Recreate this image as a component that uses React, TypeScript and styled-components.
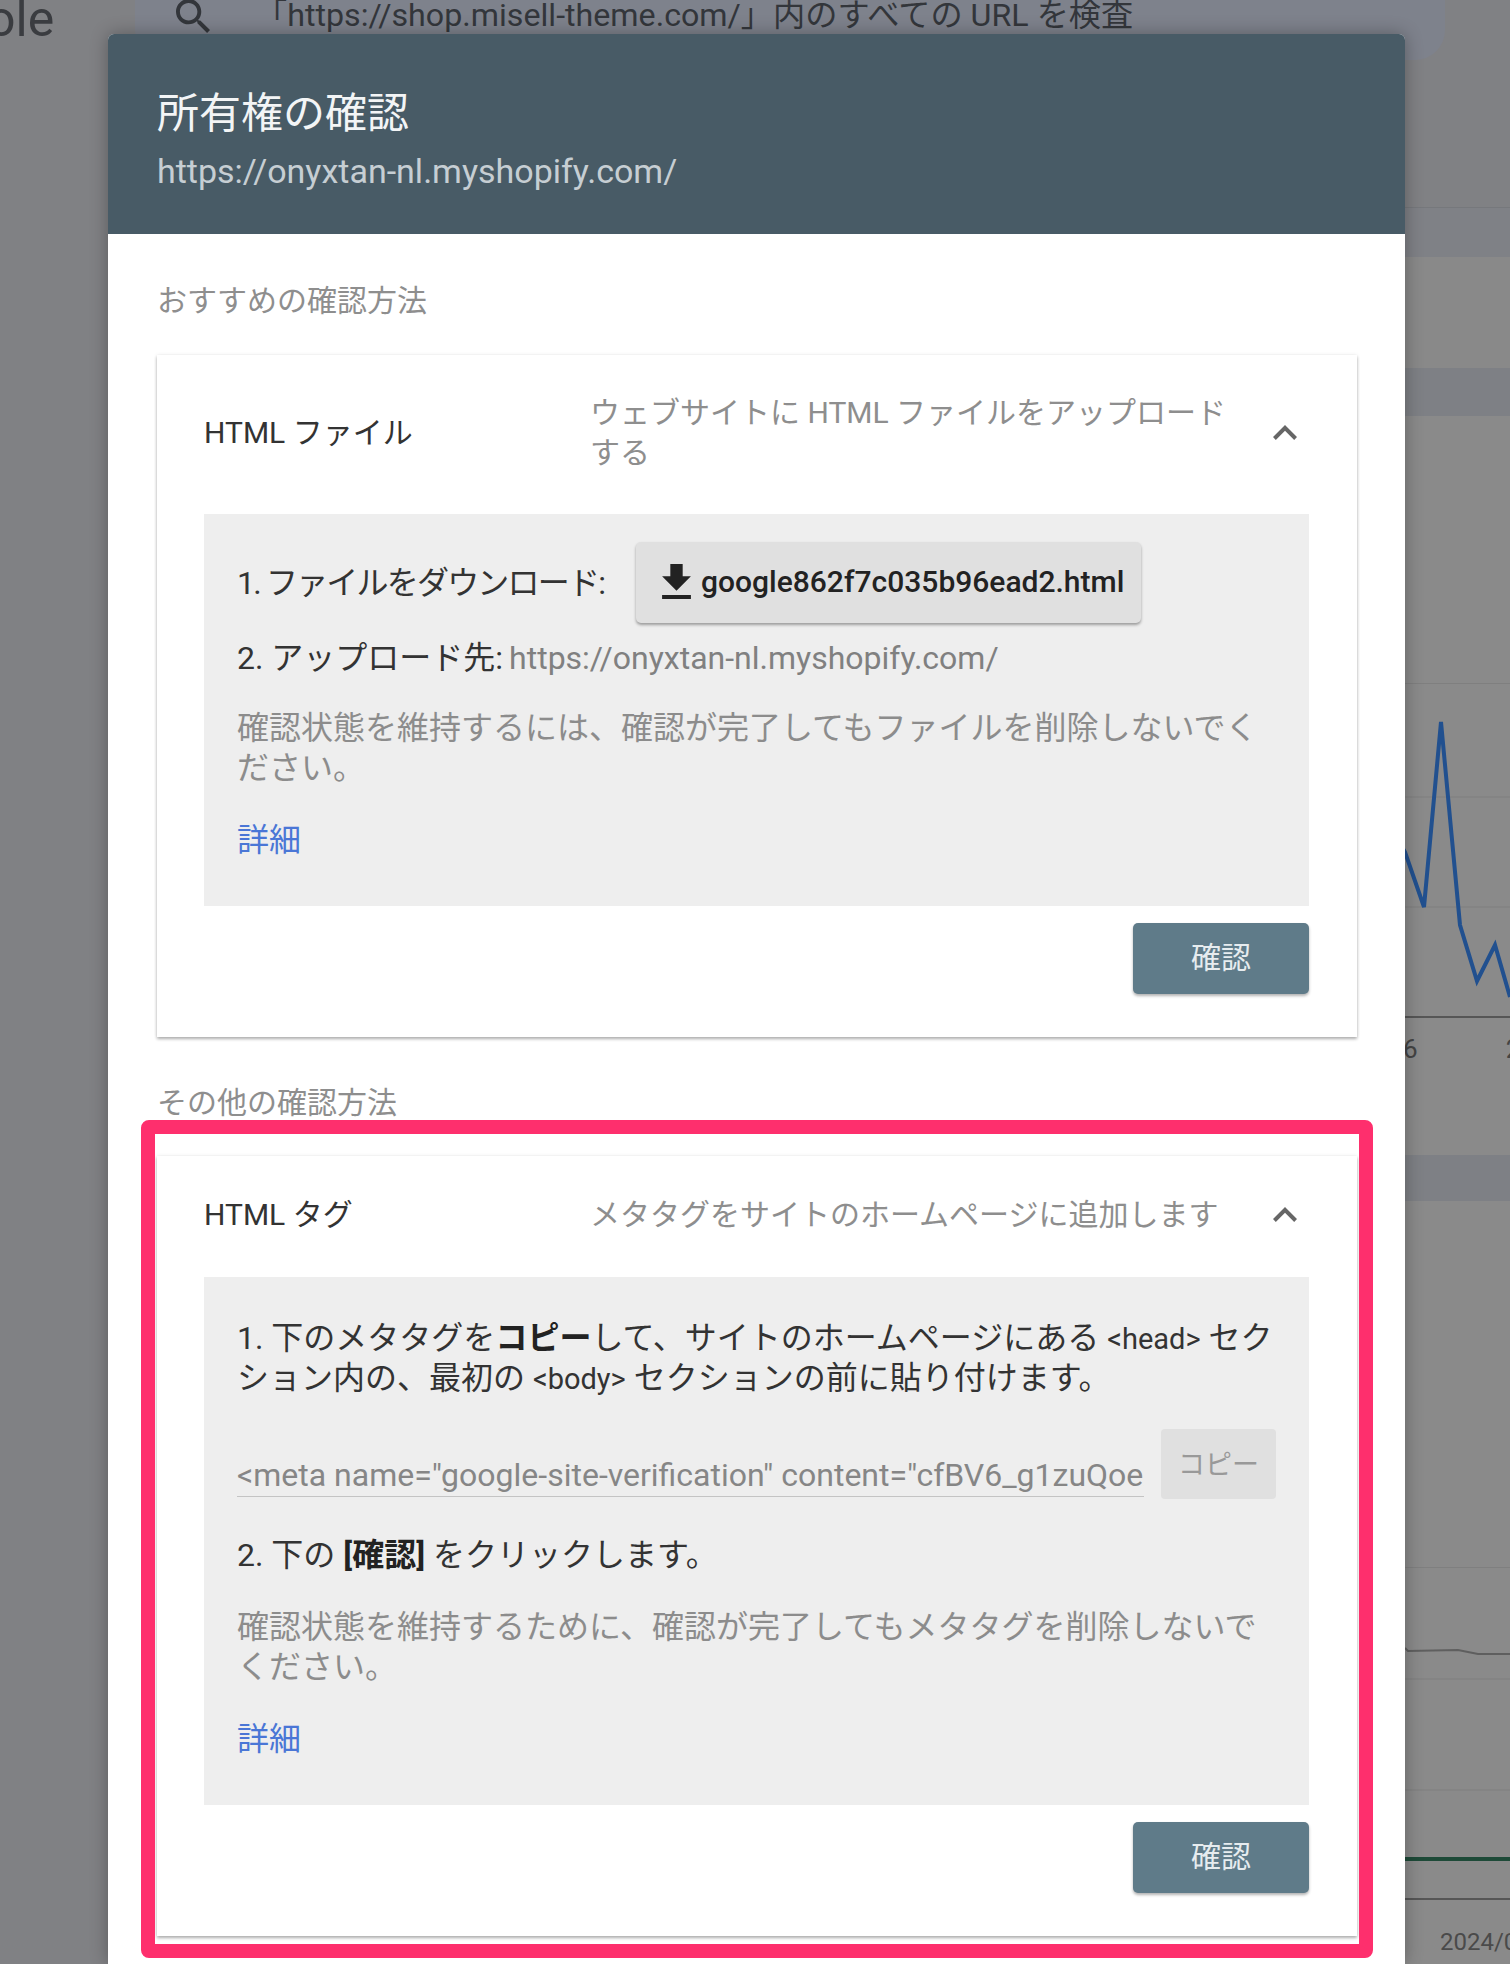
import styled, { createGlobalStyle } from 'styled-components';

const GlobalStyle = createGlobalStyle`
  html, body {
    margin: 0;
    padding: 0;
    background: #808184;
  }
  body {
    font-family: Roboto, "Noto Sans CJK JP", sans-serif;
  }
`;

const ChevronUp = () => (
  <Chevron viewBox="6 8 12 7.41" width="24" height="15">
    <path d="M12 8l-6 6 1.41 1.41L12 10.83l4.59 4.58L18 14z" />
  </Chevron>
);

const App = () => {
  return (
    <Page>
      <GlobalStyle />
      <Backdrop>
        <TopBar>
          <Logo>ole</Logo>
          <SearchBar>
            <SearchIcon viewBox="3 3 17.49 17.49" width="34" height="34">
              <path d="M15.5 14h-.79l-.28-.27C15.41 12.59 16 11.11 16 9.5 16 5.91 13.09 3 9.5 3S3 5.91 3 9.5 5.91 16 9.5 16c1.61 0 3.09-.59 4.23-1.57l.27.28v.79l5 4.99L20.49 19l-4.99-5zm-6 0C7.01 14 5 11.99 5 9.5S7.01 5 9.5 5 14 7.01 14 9.5 11.99 14 9.5 14z" />
            </SearchIcon>
            <SearchText>「https://shop.misell-theme.com/」内のすべての URL を検査</SearchText>
          </SearchBar>
        </TopBar>
        <Columns>
          <Sidebar />
          <Main>
            <Stripe $height={50} $ruled />
            <Stripe $height={111} $tone="plain" />
            <Stripe $height={48} $tone="band" />
            <ChartPanel $top={267} $height={739}>
              <svg width="1402" height="335" viewBox="0 0 1402 335">
                <GridLine x2="1402" y1="0.5" y2="0.5" />
                <GridLine x2="1402" y1="114" y2="114" />
                <GridLine x2="1402" y1="224" y2="224" />
                <AxisLine x2="1402" y1="334" y2="334" />
                <polyline
                  points="1280,140 1297,169 1316,224 1333,39 1352,242 1369,298 1387,262 1402,314"
                  fill="none"
                  stroke="#21508f"
                  strokeWidth="4"
                />
              </svg>
              <AxisLabels>
                <span>6</span>
                <span>2</span>
              </AxisLabels>
            </ChartPanel>
            <Stripe $height={46} $tone="band" />
            <ChartPanel $top={366} $height={763}>
              <svg width="1402" height="335" viewBox="0 0 1402 335">
                <GridLine x2="1402" y1="0.5" y2="0.5" />
                <GridLine x2="1402" y1="112" y2="112" />
                <GridLine x2="1402" y1="223" y2="223" />
                <AxisLine x2="1402" y1="332" y2="332" />
                <polyline
                  points="1297,81 1300,84 1350,83 1370,87 1402,87"
                  fill="none"
                  stroke="#5f5f5f"
                  strokeWidth="2"
                />
                <line x1="1280" x2="1402" y1="292" y2="292" stroke="#1e4a38" strokeWidth="4" />
              </svg>
              <DateLabel>2024/0</DateLabel>
            </ChartPanel>
          </Main>
        </Columns>
      </Backdrop>

      <Modal>
        <ModalHeader>
          <ModalTitle>所有権の確認</ModalTitle>
          <ModalSubtitle>https://onyxtan-nl.myshopify.com/</ModalSubtitle>
        </ModalHeader>
        <ModalBody>
          <SectionLabel $top={47} $bottom={34}>おすすめの確認方法</SectionLabel>
          <Card>
            <CardHead>
              <CardTitle>HTML ファイル</CardTitle>
              <CardDesc>ウェブサイトに HTML ファイルをアップロードする</CardDesc>
              <ChevronUp />
            </CardHead>
            <Panel $top={28}>
              <DownloadRow>
                <DownloadLabel>1. ファイルをダウンロード:</DownloadLabel>
                <DownloadButton>
                  <svg viewBox="5 3 14 17" width="29" height="35" fill="#222">
                    <path d="M19 9h-4V3H9v6H5l7 7 7-7zM5 18v2h14v-2H5z" />
                  </svg>
                  google862f7c035b96ead2.html
                </DownloadButton>
              </DownloadRow>
              <StepText $top={15}>
                2. アップロード先: <Url>https://onyxtan-nl.myshopify.com/</Url>
              </StepText>
              <Hint>確認状態を維持するには、確認が完了してもファイルを削除しないでください。</Hint>
              <MoreLink href="#">詳細</MoreLink>
            </Panel>
            <CardFoot>
              <ConfirmButton>確認</ConfirmButton>
            </CardFoot>
          </Card>

          <SectionLabel $top={46} $bottom={33}>その他の確認方法</SectionLabel>
          <Card>
            <CardHead>
              <CardTitle>HTML タグ</CardTitle>
              <CardDesc>メタタグをサイトのホームページに追加します</CardDesc>
              <ChevronUp />
            </CardHead>
            <Panel $top={41}>
              <StepText>
                1. 下のメタタグを<b>コピー</b>して、サイトのホームページにある <Code>&lt;head&gt;</Code> セクション内の、最初の <Code>&lt;body&gt;</Code> セクションの前に貼り付けます。
              </StepText>
              <MetaRow>
                <MetaField>
                  &lt;meta name="google-site-verification" content="cfBV6_g1zuQoeXk2mT8vYpLr" /&gt;
                </MetaField>
                <CopyButton>コピー</CopyButton>
              </MetaRow>
              <StepText $top={36}>
                2. 下の <b>[確認]</b> をクリックします。
              </StepText>
              <Hint $top={32}>確認状態を維持するために、確認が完了してもメタタグを削除しないでください。</Hint>
              <MoreLink href="#">詳細</MoreLink>
            </Panel>
            <CardFoot>
              <ConfirmButton>確認</ConfirmButton>
            </CardFoot>
            <Highlight />
          </Card>
        </ModalBody>
      </Modal>
    </Page>
  );
};

export default App;

const Page = styled.div`
  position: relative;
  width: 1510px;
  height: 1964px;
  overflow: hidden;
`;

const Backdrop = styled.div`
  display: flex;
  flex-direction: column;
  height: 100%;
  background: #808184;
`;

const TopBar = styled.header`
  display: flex;
  flex: none;
  height: 207px;
`;

const Logo = styled.div`
  flex: none;
  width: 121px;
  margin: -2px 27px 0 -13px;
  font-size: 50px;
  line-height: 42px;
  color: #3a3c40;
`;

const SearchBar = styled.div`
  display: flex;
  align-items: center;
  flex: none;
  width: 1310px;
  height: 90px;
  margin-top: -30px;
  padding: 30px 0 0 41px;
  box-sizing: border-box;
  border-radius: 0 0 30px 30px;
  background: #7e828c;
`;

const SearchIcon = styled.svg`
  flex: none;
  margin-top: -28px;
  fill: #33363b;
`;

const SearchText = styled.div`
  margin: -30px 0 0 45px;
  font-size: 32.2px;
  line-height: 30px;
  color: #33363b;
  white-space: nowrap;
`;

const Columns = styled.div`
  display: flex;
  flex: 1;
`;

const Sidebar = styled.aside`
  flex: none;
  width: 108px;
`;

const Main = styled.main`
  display: flex;
  flex-direction: column;
  flex: 1;
  min-width: 0;
`;

const Stripe = styled.div<{ $height: number; $tone?: 'plain' | 'band'; $ruled?: boolean }>`
  flex: none;
  height: ${({ $height }) => $height}px;
  box-sizing: border-box;
  border-top: ${({ $ruled }) => ($ruled ? '1px solid #76787c' : '0')};
  background: ${({ $tone }) =>
    $tone === 'plain' ? '#898989' : $tone === 'band' ? '#7e8085' : '#7f8186'};
`;

const ChartPanel = styled.section<{ $top: number; $height: number }>`
  flex: none;
  height: ${({ $height }) => $height}px;
  padding-top: ${({ $top }) => $top}px;
  box-sizing: border-box;
  background: #8a8a8a;

  svg {
    display: block;
  }
`;

const GridLine = styled.line`
  stroke: #7f7f7f;
  stroke-width: 1;
`;

const AxisLine = styled.line`
  stroke: #565656;
  stroke-width: 2;
`;

const AxisLabels = styled.div`
  display: flex;
  gap: 88px;
  padding: 14px 0 0 1295px;
  font-size: 26px;
  line-height: 34px;
  color: #444;
`;

const DateLabel = styled.div`
  padding: 23px 0 0 1332px;
  font-size: 24px;
  line-height: 34px;
  color: #4a4a4a;
  white-space: nowrap;
`;

const Modal = styled.div`
  position: absolute;
  top: 34px;
  left: 108px;
  bottom: 0;
  width: 1297px;
  border-radius: 6px 6px 0 0;
  background: #fff;
  box-shadow: 0 0 18px rgba(0, 0, 0, 0.3);
`;

const ModalHeader = styled.div`
  height: 200px;
  padding: 55px 48px 0 49px;
  box-sizing: border-box;
  border-radius: 6px 6px 0 0;
  background: #485b66;
`;

const ModalTitle = styled.h2`
  margin: 0;
  font-size: 42px;
  font-weight: 400;
  line-height: 50px;
  color: #f3f5f6;
`;

const ModalSubtitle = styled.div`
  margin-top: 12px;
  font-size: 34px;
  line-height: 40px;
  color: #c6ced3;
`;

const ModalBody = styled.div`
  padding: 0 48px 0 49px;
`;

const SectionLabel = styled.div<{ $top: number; $bottom: number }>`
  margin: ${({ $top }) => $top}px 0 ${({ $bottom }) => $bottom}px;
  font-size: 30px;
  line-height: 40px;
  color: #8e8e8e;
`;

const Card = styled.section`
  position: relative;
  background: #fff;
  box-shadow: 0 2px 3px rgba(0, 0, 0, 0.3), 0 0 4px rgba(0, 0, 0, 0.08);
`;

const CardHead = styled.div`
  display: flex;
  align-items: center;
  min-height: 42px;
  padding: 38px 48px 41px 47px;
`;

const CardTitle = styled.div`
  flex: none;
  width: 386px;
  font-size: 30px;
  line-height: 40px;
  color: #333;
`;

const CardDesc = styled.div`
  width: 640px;
  font-size: 30px;
  line-height: 40px;
  color: #8e8e8e;
`;

const Chevron = styled.svg`
  flex: none;
  margin-left: auto;
  margin-right: 12px;
  margin-top: -2px;
  fill: #666;
`;

const Panel = styled.div<{ $top: number }>`
  margin: 0 48px 0 47px;
  padding: ${({ $top }) => $top}px 33px 46px;
  background: #eee;
`;

const StepText = styled.div<{ $top?: number }>`
  margin-top: ${({ $top }) => $top ?? 0}px;
  font-size: 32px;
  line-height: 40px;
  color: #333;

  b {
    color: #222;
    font-weight: 700;
  }
`;

const DownloadRow = styled.div`
  display: flex;
  align-items: center;
`;

const DownloadLabel = styled.div`
  flex: none;
  width: 399px;
  font-size: 32px;
  line-height: 40px;
  letter-spacing: -1.8px;
  color: #333;
`;

const DownloadButton = styled.button`
  display: flex;
  align-items: center;
  gap: 10px;
  width: 505px;
  height: 81px;
  padding: 0 0 2px 26px;
  box-sizing: border-box;
  border: 0;
  border-radius: 5px;
  background: #e0e0e0;
  box-shadow: 0 2px 3px rgba(0, 0, 0, 0.35);
  font-family: inherit;
  font-size: 30px;
  font-weight: 500;
  color: #222;
  white-space: nowrap;
`;

const Url = styled.span`
  margin-left: -2px;
  color: #808080;
`;

const Hint = styled.p<{ $top?: number }>`
  margin: ${({ $top }) => $top ?? 30}px 0 0;
  font-size: 32px;
  line-height: 40px;
  color: #8c8c8c;
`;

const MoreLink = styled.a`
  display: block;
  margin-top: 32px;
  font-size: 32px;
  line-height: 40px;
  color: #4a76d6;
  text-decoration: none;
`;

const Code = styled.code`
  font-family: Roboto, sans-serif;
  font-size: 29px;
  line-height: 1;
`;

const MetaRow = styled.div`
  display: flex;
  align-items: flex-end;
  gap: 17px;
  margin-top: 31px;
`;

const MetaField = styled.div`
  flex: 1;
  min-width: 0;
  overflow: hidden;
  margin-bottom: 2px;
  padding-bottom: 1px;
  border-bottom: 1px solid #c4c4c4;
  font-size: 32px;
  line-height: 40px;
  color: #868686;
  white-space: nowrap;
`;

const CopyButton = styled.button`
  flex: none;
  width: 115px;
  height: 70px;
  padding: 0 0 4px;
  border: 0;
  border-radius: 4px;
  background: #e0e0e0;
  font-family: inherit;
  font-size: 27px;
  color: #999;
`;

const CardFoot = styled.div`
  display: flex;
  justify-content: flex-end;
  padding: 17px 48px 43px 47px;
`;

const ConfirmButton = styled.button`
  width: 176px;
  height: 71px;
  padding: 0 0 7px;
  border: 0;
  border-radius: 5px;
  background: #5f7b89;
  box-shadow: 0 2px 3px rgba(0, 0, 0, 0.3);
  font-family: inherit;
  font-size: 30px;
  color: #e6ecef;
`;

// pink annotation drawn around the second card
const Highlight = styled.div`
  position: absolute;
  inset: -36px -16px -22px -16px;
  border: 14px solid #fe2f6d;
  border-radius: 8px;
  pointer-events: none;
`;
